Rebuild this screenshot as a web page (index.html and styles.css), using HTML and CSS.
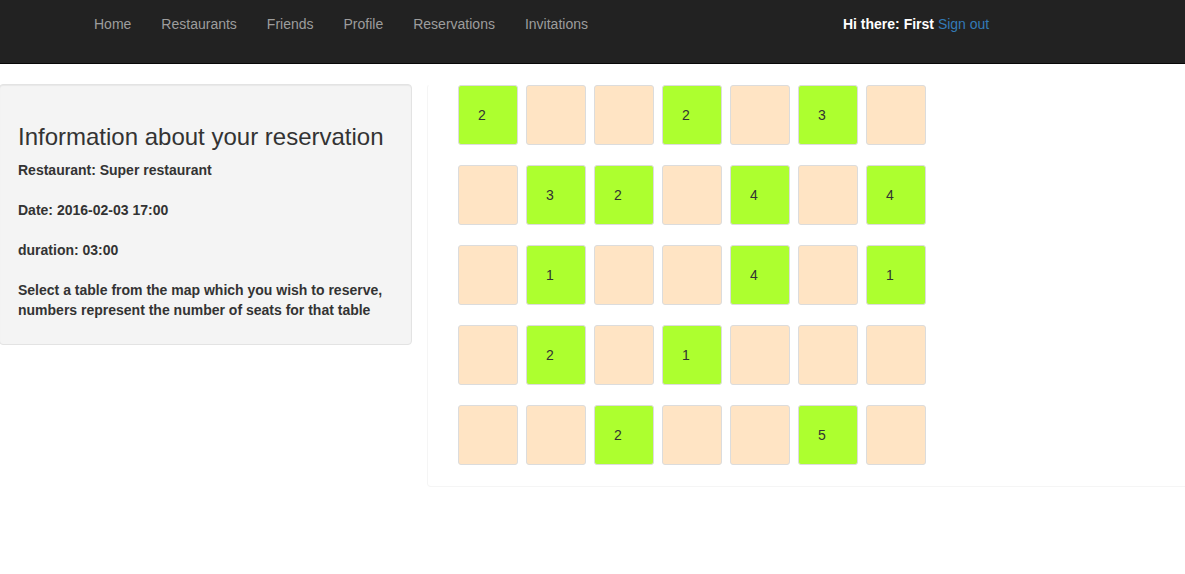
FILE: index.html
```html
<!DOCTYPE html>
<html>
<head>
<meta charset="utf-8">
<title>Reservation</title>
<link rel="stylesheet" href="styles.css">
</head>
<body>
<nav class="navbar">
  <ul class="nav-links">
    <li><a href="#">Home</a></li>
    <li><a href="#">Restaurants</a></li>
    <li><a href="#">Friends</a></li>
    <li><a href="#">Profile</a></li>
    <li><a href="#">Reservations</a></li>
    <li><a href="#">Invitations</a></li>
  </ul>
  <div class="user"><b>Hi there: First</b> <a href="#">Sign out</a></div>
</nav>
<main class="content">
  <section class="info">
    <h3>Information about your reservation</h3>
    <p>Restaurant: Super restaurant</p>
    <p>Date: 2016-02-03 17:00</p>
    <p>duration: 03:00</p>
    <p>Select a table from the map which you wish to reserve, numbers represent the number of seats for that table</p>
  </section>
  <section class="map">
    <div class="grid">
      <div class="tile free">2</div><div class="tile"></div><div class="tile"></div><div class="tile free">2</div><div class="tile"></div><div class="tile free">3</div><div class="tile"></div>
      <div class="tile"></div><div class="tile free">3</div><div class="tile free">2</div><div class="tile"></div><div class="tile free">4</div><div class="tile"></div><div class="tile free">4</div>
      <div class="tile"></div><div class="tile free">1</div><div class="tile"></div><div class="tile"></div><div class="tile free">4</div><div class="tile"></div><div class="tile free">1</div>
      <div class="tile"></div><div class="tile free">2</div><div class="tile"></div><div class="tile free">1</div><div class="tile"></div><div class="tile"></div><div class="tile"></div>
      <div class="tile"></div><div class="tile"></div><div class="tile free">2</div><div class="tile"></div><div class="tile"></div><div class="tile free">5</div><div class="tile"></div>
    </div>
  </section>
</main>
</body>
</html>
```
FILE: styles.css
```css
html, body {
  margin: 0;
  padding: 0;
  overflow: hidden;
}
body {
  font-family: "Liberation Sans", Arial, Helvetica, sans-serif;
  font-size: 14px;
  line-height: 20px;
  color: #333;
  background: #fff;
}
.navbar {
  height: 63px;
  background: #222;
  border-bottom: 1px solid #080808;
  display: flex;
  align-items: flex-start;
}
.nav-links {
  list-style: none;
  margin: 0;
  padding: 0 0 0 79px;
  display: flex;
}
.nav-links a {
  display: block;
  padding: 14px 15px 12px;
  color: #9d9d9d;
  text-decoration: none;
}
.user {
  margin-left: 240px;
  padding-top: 14px;
  color: #fff;
}
.user a {
  color: #337ab7;
  text-decoration: none;
}
.content {
  display: flex;
  align-items: flex-start;
  padding-top: 20px;
}
.info {
  width: 393px;
  margin-left: -1px;
  padding: 19px 0 24px 18px;
  background: #f4f4f4;
  border: 1px solid #e3e3e3;
  border-radius: 4px;
  box-shadow: inset 0 1px 1px rgba(0,0,0,.05);
  font-weight: bold;
}
.info h3 {
  margin: 20px 0 10px;
  font-size: 24px;
  line-height: 26px;
  font-weight: 500;
  color: #333;
}
.info p {
  margin: 0 0 20px;
}
.info p:last-child {
  margin-bottom: 0;
}
.map {
  margin-left: 15px;
  flex: 1;
  margin-right: -10px;
  padding: 0 0 21px 30px;
  border: 1px solid #f5f5f5;
  border-top-color: #fff;
  border-radius: 4px;
}
.grid {
  display: grid;
  grid-template-columns: repeat(7, 60px);
  column-gap: 8px;
  row-gap: 20px;
}
.tile {
  height: 58px;
  background: #ffe4c4;
  border: 1px solid #dcdcdc;
  border-radius: 3px;
  padding-left: 19px;
  display: flex;
  align-items: center;
  color: #333;
}
.tile.free {
  background: #adff2f;
}
```
